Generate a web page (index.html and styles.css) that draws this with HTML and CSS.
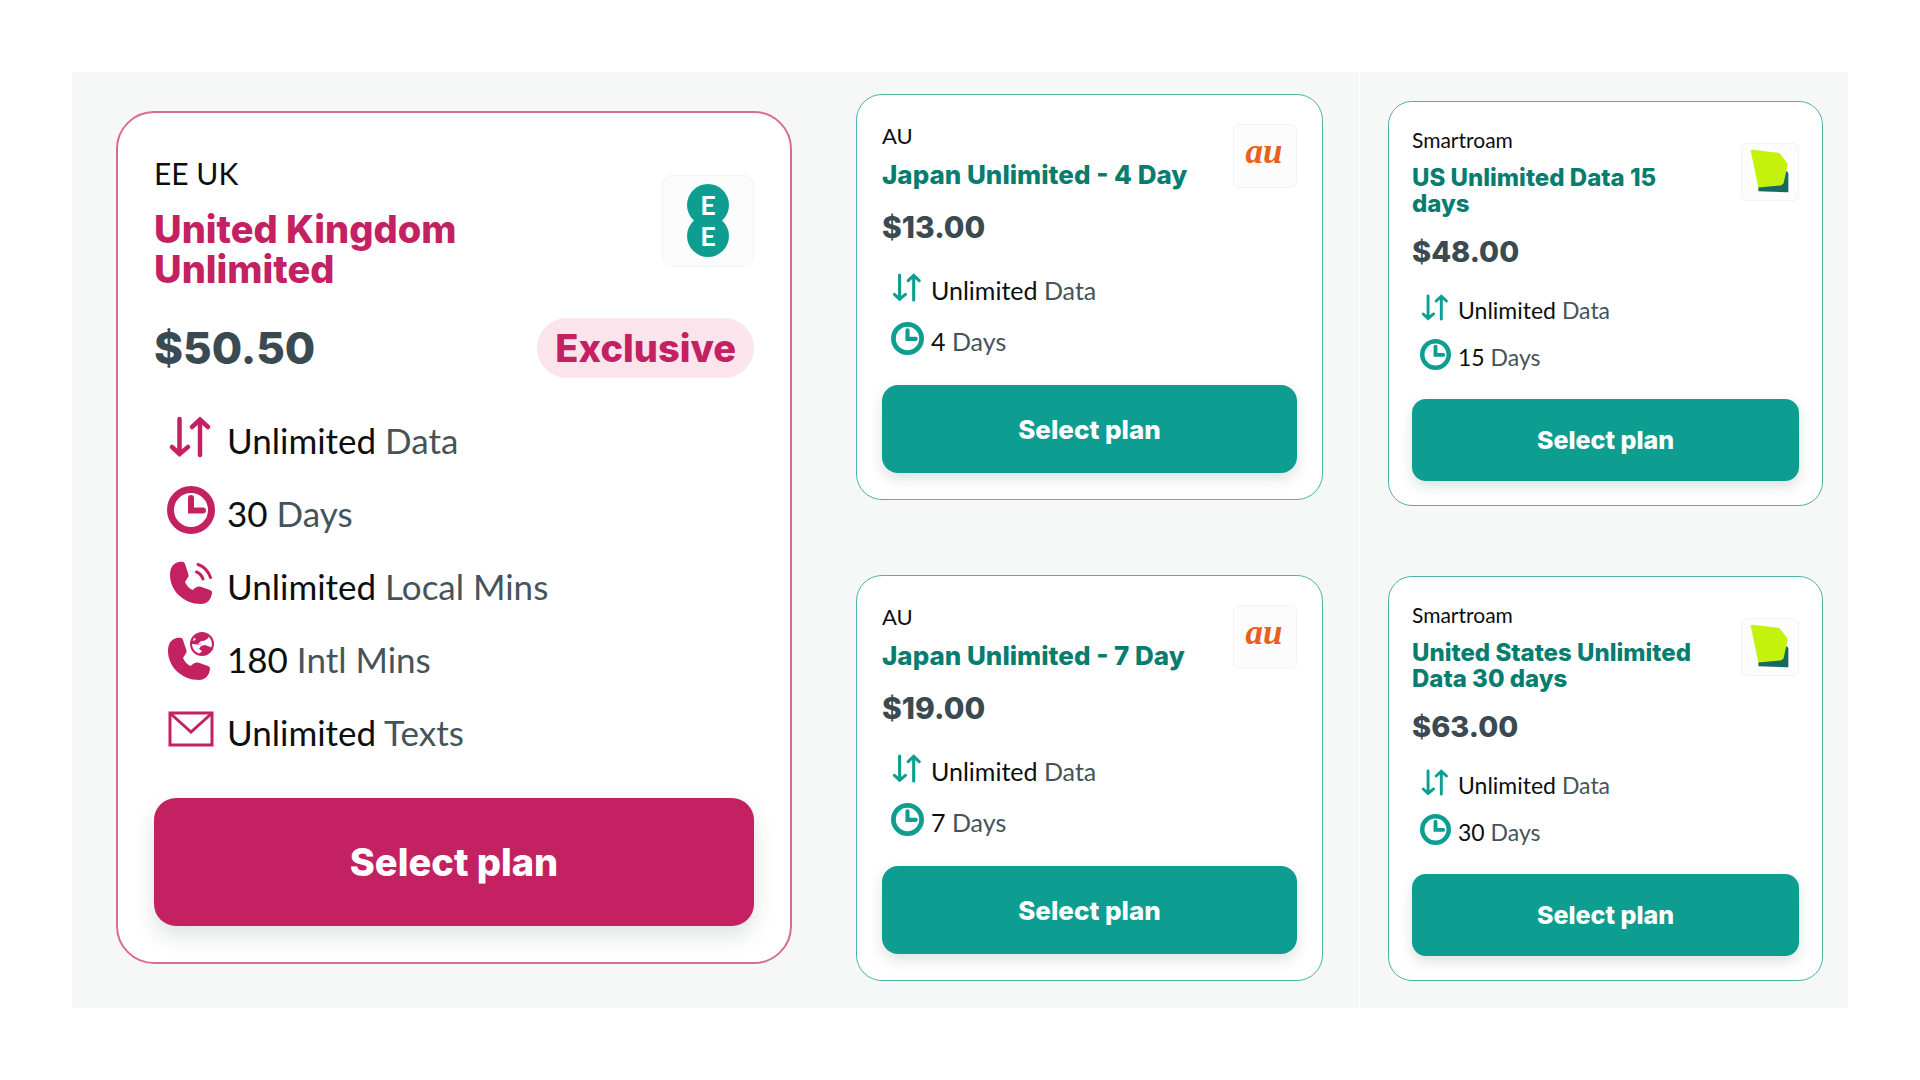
FILE: index.html
```html
<!DOCTYPE html>
<html lang="en">
<head>
    <meta charset="UTF-8">
    <meta name="viewport" content="width=device-width, initial-scale=1.0">
    <title>eSIM Plans</title>
    <link rel="stylesheet" href="styles.css">
</head>
<body>
    <!-- Shared icons -->
    <svg class="sprite" aria-hidden="true">
        <symbol id="icon-data" viewBox="0 0 48 48">
            <path class="line" stroke-width="4.500" d="M12.500 6V41M5 34l7.500 7 8.500-7M33 42V7M25 14l8-7.500 8 7.500"/>
        </symbol>
        <symbol id="icon-clock" viewBox="0 0 48 48">
            <circle class="line" stroke-width="7" cx="24" cy="24" r="20.500"/>
            <path class="line" stroke-width="6" d="M24 12V24.500H36"/>
        </symbol>
        <symbol id="icon-handset" viewBox="0 0 48 48">
            <path fill="currentColor" d="M9 4C11 3 14 2.500 16.500 3Q17.500 3.500 18 5L21.500 15.500Q22 17.500 20.500 19L18 23Q20 28 25.500 31L28 29Q30 27 33 27.500L43 31Q45.500 32 45 34C44 41 40 45 34 45C17 45 3 32 3 16C3 10 5 6 9 4Z"/>
        </symbol>
        <symbol id="icon-call" viewBox="0 0 48 48">
            <use href="#icon-handset" width="48" height="48"/>
            <path class="line" stroke-width="3" d="M31 5.500Q40 8.500 43.500 18.500M29.500 13Q34 14.500 36 20"/>
        </symbol>
        <symbol id="icon-intl" viewBox="0 0 48 48">
            <use href="#icon-handset" x="-2" y="3" width="48" height="48"/>
            <circle class="line" stroke-width="2" cx="35" cy="12" r="11"/>
            <path fill="currentColor" d="M27 5C31 1 38 0 42 3C42 7 38 9 34 9L31 12L36 13L25 12L24 9L29 8ZM34 14L38 13L46 16C43 22 37 24 32 22L35 19L32 17Z"/>
        </symbol>
        <symbol id="icon-mail" viewBox="0 0 48 48">
            <rect class="line" stroke-width="3" x="3" y="8" width="42" height="32"/>
            <path class="line" stroke-width="3" d="M4 9L24 27L44 9"/>
        </symbol>
        <symbol id="logo-smartroam" viewBox="0 0 58 58">
            <path fill="#17695f" d="M46 28L48 30V50L17 49V44Z"/>
            <path fill="#c4f20c" d="M9 7Q9 6 11 6L37 9Q39 9 40 11L47 20V23L43 41Q42 42 40 43L17 45Z"/>
        </symbol>
    </svg>

    <main class="plans">
        <section class="pane pane-featured">
            <article class="card card-large card-pink">
                <header class="card-header">
                    <div>
                        <p class="brand">EE UK</p>
                        <h2 class="title">United Kingdom Unlimited</h2>
                    </div>
                    <svg class="logo" viewBox="0 0 90 90" role="img" aria-label="EE">
                        <circle fill="#0d9e91" cx="45" cy="29" r="21"/>
                        <circle fill="#0d9e91" cx="45" cy="60" r="21"/>
                        <text class="logo-ee-text" x="45" y="39">E</text>
                        <text class="logo-ee-text" x="45" y="70">E</text>
                    </svg>
                </header>
                <div class="price-row">
                    <p class="price">$50.50</p>
                    <span class="badge">Exclusive</span>
                </div>
                <ul class="features">
                    <li><svg class="icon"><use href="#icon-data"/></svg><span><b>Unlimited</b> Data</span></li>
                    <li><svg class="icon"><use href="#icon-clock"/></svg><span><b>30</b> Days</span></li>
                    <li><svg class="icon"><use href="#icon-call"/></svg><span><b>Unlimited</b> Local Mins</span></li>
                    <li><svg class="icon"><use href="#icon-intl"/></svg><span><b>180</b> Intl Mins</span></li>
                    <li><svg class="icon"><use href="#icon-mail"/></svg><span><b>Unlimited</b> Texts</span></li>
                </ul>
                <button class="select-btn" type="button">Select plan</button>
            </article>
        </section>

        <section class="pane pane-japan">
            <article class="card card-medium">
                <header class="card-header">
                    <div>
                        <p class="brand">AU</p>
                        <h2 class="title">Japan Unlimited - 4 Day</h2>
                    </div>
                    <svg class="logo" viewBox="0 0 62 62" role="img" aria-label="au">
                        <text class="logo-au-text" x="30" y="38">au</text>
                    </svg>
                </header>
                <div class="price-row">
                    <p class="price">$13.00</p>
                </div>
                <ul class="features">
                    <li><svg class="icon"><use href="#icon-data"/></svg><span><b>Unlimited</b> Data</span></li>
                    <li><svg class="icon"><use href="#icon-clock"/></svg><span><b>4</b> Days</span></li>
                </ul>
                <button class="select-btn" type="button">Select plan</button>
            </article>

            <article class="card card-medium">
                <header class="card-header">
                    <div>
                        <p class="brand">AU</p>
                        <h2 class="title">Japan Unlimited - 7 Day</h2>
                    </div>
                    <svg class="logo" viewBox="0 0 62 62" role="img" aria-label="au">
                        <text class="logo-au-text" x="30" y="38">au</text>
                    </svg>
                </header>
                <div class="price-row">
                    <p class="price">$19.00</p>
                </div>
                <ul class="features">
                    <li><svg class="icon"><use href="#icon-data"/></svg><span><b>Unlimited</b> Data</span></li>
                    <li><svg class="icon"><use href="#icon-clock"/></svg><span><b>7</b> Days</span></li>
                </ul>
                <button class="select-btn" type="button">Select plan</button>
            </article>
        </section>

        <section class="pane pane-us">
            <article class="card card-small">
                <header class="card-header">
                    <div>
                        <p class="brand">Smartroam</p>
                        <h2 class="title">US Unlimited Data 15 days</h2>
                    </div>
                    <svg class="logo" role="img" aria-label="Smartroam"><use href="#logo-smartroam"/></svg>
                </header>
                <div class="price-row">
                    <p class="price">$48.00</p>
                </div>
                <ul class="features">
                    <li><svg class="icon"><use href="#icon-data"/></svg><span><b>Unlimited</b> Data</span></li>
                    <li><svg class="icon"><use href="#icon-clock"/></svg><span><b>15</b> Days</span></li>
                </ul>
                <button class="select-btn" type="button">Select plan</button>
            </article>

            <article class="card card-small">
                <header class="card-header">
                    <div>
                        <p class="brand">Smartroam</p>
                        <h2 class="title">United States Unlimited Data 30 days</h2>
                    </div>
                    <svg class="logo" role="img" aria-label="Smartroam"><use href="#logo-smartroam"/></svg>
                </header>
                <div class="price-row">
                    <p class="price">$63.00</p>
                </div>
                <ul class="features">
                    <li><svg class="icon"><use href="#icon-data"/></svg><span><b>Unlimited</b> Data</span></li>
                    <li><svg class="icon"><use href="#icon-clock"/></svg><span><b>30</b> Days</span></li>
                </ul>
                <button class="select-btn" type="button">Select plan</button>
            </article>
        </section>
    </main>
</body>
</html>
```
FILE: styles.css
```css
* {
    box-sizing: border-box;
}

body {
    margin: 0;
    padding: 72px;
    background-color: #fff;
    color: #0b0f10;
    font-family: Lato, "Liberation Sans", sans-serif;
}

p, h2, ul {
    margin: 0;
    padding: 0;
}

.sprite {
    position: absolute;
    width: 0;
    height: 0;
}

.line {
    fill: none;
    stroke: currentColor;
    stroke-linecap: round;
}

/* Page layout */
.plans {
    display: grid;
    grid-template-columns: 760fr 527fr 489fr;
    background-color: #f6f8f7;
}

.pane {
    display: flex;
    flex-direction: column;
}

.pane-featured {
    padding: 39px 40px 44px 44px;
}

.pane-japan {
    gap: 75px;
    padding: 22px 36px 26px 24px;
}

.pane-us {
    gap: 70px;
    padding: 29px 25px 26px 28px;
    border-left: 1px solid #fff;
}

/* Plan card */
.card {
    --accent: #0d9e91;
    --title: #077d70;
    background-color: #fff;
    border: 1px solid #4cb3a9;
}

.card-pink {
    --accent: #c32162;
    --title: #c32162;
    border: 2px solid #d96c97;
}

.card-header {
    display: flex;
    align-items: center;
    justify-content: space-between;
    gap: 24px;
}

.title, .price, .badge, .select-btn {
    font-family: Inter, "Liberation Sans", sans-serif;
    font-weight: 800;
}

.title {
    color: var(--title);
}

.logo {
    flex: none;
    background-color: #fcfcfc;
    border: 1px solid #f2f3f3;
    border-radius: 6px;
}

.logo-ee-text {
    fill: #fff;
    font: 700 27px Lato, sans-serif;
    text-anchor: middle;
}

.logo-au-text {
    fill: #eb5f1c;
    font: italic 700 35px "Liberation Serif", serif;
    text-anchor: middle;
}

.price-row {
    display: flex;
    align-items: center;
    justify-content: space-between;
}

.price {
    color: #3b4a50;
}

.badge {
    padding: 0 18px;
    border-radius: 30px;
    background-color: #fbe4eb;
    color: var(--accent);
}

.features {
    list-style: none;
    color: #45545a;
}

.features li {
    display: flex;
    align-items: center;
}

.features b {
    color: #0b0f10;
    font-weight: 400;
}

.icon {
    flex: none;
    color: var(--accent);
}

.select-btn {
    display: block;
    width: 100%;
    padding: 0;
    border: none;
    background-color: var(--accent);
    color: #fff;
    box-shadow: 0 6px 14px rgba(30, 50, 50, 0.14);
    cursor: pointer;
}

/* Large card */
.card-large {
    padding: 40px 36px 36px;
    border-radius: 38px;
}

.card-large .card-header {
    gap: 80px;
}

.card-large .brand {
    margin-bottom: 16px;
    font-size: 30px;
    line-height: 40px;
}

.card-large .title {
    font-size: 38px;
    line-height: 40px;
}

.card-large .logo {
    width: 92px;
    height: 92px;
    border-radius: 10px;
}

.card-large .price-row {
    margin: 29px 0 25px;
}

.card-large .price {
    font-size: 44px;
    line-height: 60px;
}

.card-large .badge {
    font-size: 38px;
    line-height: 60px;
}

.card-large .features {
    padding-left: 13px;
    font-size: 35px;
}

.card-large .features li {
    gap: 12px;
    height: 73px;
}

.card-large .icon {
    width: 48px;
    height: 48px;
    margin-bottom: 6px;
}

.card-large .select-btn {
    height: 128px;
    margin-top: 30px;
    border-radius: 22px;
    font-size: 38px;
    box-shadow: 0 10px 22px rgba(30, 50, 50, 0.14);
}

/* Medium card */
.card-medium {
    padding: 28px 25px 26px;
    border-radius: 26px;
}

.card-medium .brand {
    margin-bottom: 13px;
    font-size: 22px;
    line-height: 26px;
}

.card-medium .title {
    font-size: 26px;
    line-height: 26px;
}

.card-medium .logo {
    width: 64px;
    height: 64px;
}

.card-medium .price-row {
    margin: 19px 0 17px;
}

.card-medium .price {
    font-size: 30px;
    line-height: 40px;
}

.card-medium .features {
    padding-left: 9px;
    font-size: 25px;
}

.card-medium .features li {
    gap: 7px;
    height: 51px;
}

.card-medium .icon {
    width: 33px;
    height: 33px;
    margin-bottom: 4px;
}

.card-medium .select-btn {
    height: 88px;
    margin-top: 19px;
    border-radius: 16px;
    font-size: 26px;
}

/* Small card */
.card-small {
    padding: 25px 23px 24px;
    border-radius: 24px;
}

.card-small .brand {
    margin-bottom: 12px;
    font-size: 21px;
    line-height: 26px;
}

.card-small .title {
    font-size: 24px;
    line-height: 26px;
}

.card-small .logo {
    width: 58px;
    height: 58px;
}

.card-small .price-row {
    margin: 17px 0 16px;
}

.card-small .price {
    font-size: 29px;
    line-height: 36px;
}

.card-small .features {
    padding-left: 8px;
    font-size: 23px;
}

.card-small .features li {
    gap: 7px;
    height: 47px;
}

.card-small .icon {
    width: 31px;
    height: 31px;
    margin-bottom: 4px;
}

.card-small .select-btn {
    height: 82px;
    margin-top: 19px;
    border-radius: 14px;
    font-size: 25px;
}
```
